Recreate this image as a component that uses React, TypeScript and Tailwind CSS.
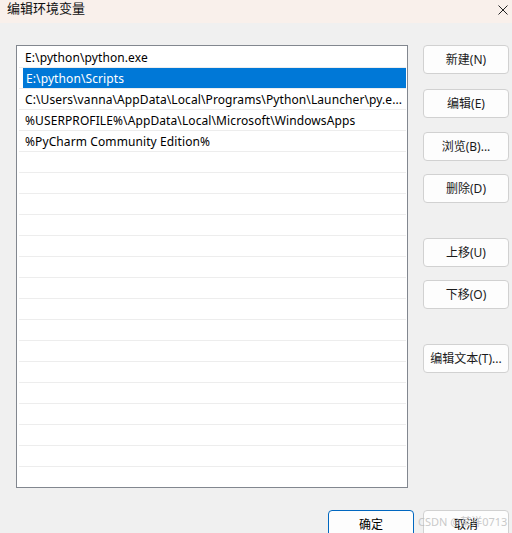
import React from "react";

const rows = [
  "E:\\python\\python.exe",
  "E:\\python\\Scripts",
  "C:\\Users\\vanna\\AppData\\Local\\Programs\\Python\\Launcher\\py.e...",
  "%USERPROFILE%\\AppData\\Local\\Microsoft\\WindowsApps",
  "%PyCharm Community Edition%",
];

const font = { fontFamily: '"Noto Sans", "Noto Sans CJK SC", sans-serif' };

function Btn({ label, className = "" }: { label: string; className?: string }) {
  return (
    <div
      className={`w-[86px] h-[29px] rounded-[4px] border border-[#d1d1d1] bg-[#fdfdfd] flex items-center justify-center text-[12px] text-[#1a1a1a] ${className}`}
    >
      {label}
    </div>
  );
}

export default function App() {
  const all = Array.from({ length: 21 }, (_, i) => rows[i] ?? "");
  return (
    <div className="w-[512px] h-[533px] bg-[#f0f0f0] overflow-hidden relative" style={font}>
      <div className="h-[23px] bg-[#f9f0eb] flex items-center justify-between pl-[7px] pr-[4px]">
        <span className="text-[13px] text-[#111] leading-none -mt-[6px]">编辑环境变量</span>
        <svg width="10" height="10" viewBox="0 0 10 10" className="-mt-[4px]">
          <path d="M0.5 0.5 L9.5 9.5 M9.5 0.5 L0.5 9.5" stroke="#222" strokeWidth="1" />
        </svg>
      </div>
      <div className="flex pt-[22px]">
        <div className="ml-[16px] w-[392px] h-[443px] border border-[#82878f] bg-white pt-px overflow-hidden">
          {all.map((t, i) => (
            <div key={i} className="h-[21px] pl-[2px] pr-[1px]">
              <div className="h-[20px] flex items-center">
                <div
                  className={`h-[20px] flex items-center pt-[2px] whitespace-nowrap overflow-hidden text-[12px] tracking-[0.1px] ${
                    i === 1 ? "bg-[#0078d7] text-white ml-[4px] pl-[3px] w-full" : "text-black pl-[6px] w-full"
                  }`}
                >
                  {t}
                </div>
              </div>
              <div className="h-px bg-[#ededed]" />
            </div>
          ))}
        </div>
        <div className="ml-[15px] flex flex-col">
          <Btn label="新建(N)" />
          <Btn label="编辑(E)" className="mt-[15px]" />
          <Btn label="浏览(B)..." className="mt-[14px]" />
          <Btn label="删除(D)" className="mt-[13px]" />
          <Btn label="上移(U)" className="mt-[35px]" />
          <Btn label="下移(O)" className="mt-[13px]" />
          <Btn label="编辑文本(T)..." className="mt-[35px]" />
        </div>
      </div>
      <div className="flex justify-end gap-[9px] pr-[3px] mt-[22px]">
        <div className="w-[86px] h-[29px] rounded-[4px] border border-[#0067c0] bg-[#fdfdfd] flex items-center justify-center text-[12px] text-black">
          确定
        </div>
        <div className="relative w-[86px] h-[29px] rounded-[4px] border border-[#d1d1d1] bg-[#fdfdfd] flex items-center justify-center text-[12px] text-black">
          取消
          <span className="absolute left-[-6px] top-[5px] text-[11px] leading-none text-[#bdbdbd] opacity-80 whitespace-nowrap">
            CSDN @某洋0713
          </span>
        </div>
      </div>
    </div>
  );
}
